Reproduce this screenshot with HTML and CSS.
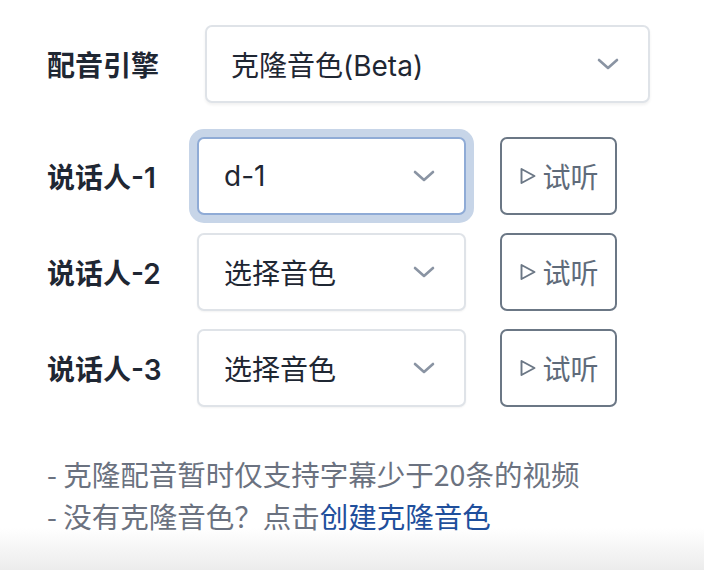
FILE: index.html
```html
<!DOCTYPE html>
<html lang="zh-CN">
<head>
<meta charset="utf-8">
<link rel="stylesheet" href="styles.css">
</head>
<body>
<div class="panel">
  <div class="engine-row">
    <div class="label engine-label">配音引擎</div>
    <div class="select engine-select">
      <span class="value">克隆音色(Beta)</span>
      <svg class="chev" width="22" height="12" viewBox="0 0 22 12"><path d="M2 2 L11 10 L20 2" fill="none" stroke="#8a94a3" stroke-width="2.6" stroke-linecap="round" stroke-linejoin="round"/></svg>
    </div>
  </div>
  <div class="speakers">
    <div class="speaker-row">
      <div class="label speaker-label">说话人-1</div>
      <div class="select voice-select focused">
        <span class="value">d-1</span>
        <svg class="chev" width="22" height="12" viewBox="0 0 22 12"><path d="M2 2 L11 10 L20 2" fill="none" stroke="#8a94a3" stroke-width="2.6" stroke-linecap="round" stroke-linejoin="round"/></svg>
      </div>
      <button class="listen"><svg class="play" width="16" height="18" viewBox="0 0 16 18"><path d="M1.5 2 L14.5 9 L1.5 16 Z" fill="none" stroke="#6b7785" stroke-width="1.9" stroke-linejoin="round"/></svg>试听</button>
    </div>
    <div class="speaker-row">
      <div class="label speaker-label">说话人-2</div>
      <div class="select voice-select">
        <span class="value">选择音色</span>
        <svg class="chev" width="22" height="12" viewBox="0 0 22 12"><path d="M2 2 L11 10 L20 2" fill="none" stroke="#8a94a3" stroke-width="2.6" stroke-linecap="round" stroke-linejoin="round"/></svg>
      </div>
      <button class="listen"><svg class="play" width="16" height="18" viewBox="0 0 16 18"><path d="M1.5 2 L14.5 9 L1.5 16 Z" fill="none" stroke="#6b7785" stroke-width="1.9" stroke-linejoin="round"/></svg>试听</button>
    </div>
    <div class="speaker-row">
      <div class="label speaker-label">说话人-3</div>
      <div class="select voice-select">
        <span class="value">选择音色</span>
        <svg class="chev" width="22" height="12" viewBox="0 0 22 12"><path d="M2 2 L11 10 L20 2" fill="none" stroke="#8a94a3" stroke-width="2.6" stroke-linecap="round" stroke-linejoin="round"/></svg>
      </div>
      <button class="listen"><svg class="play" width="16" height="18" viewBox="0 0 16 18"><path d="M1.5 2 L14.5 9 L1.5 16 Z" fill="none" stroke="#6b7785" stroke-width="1.9" stroke-linejoin="round"/></svg>试听</button>
    </div>
  </div>
  <div class="notes">
    <p class="note">- 克隆配音暂时仅支持字幕少于20条的视频</p>
    <p class="note">- 没有克隆音色？点击<a class="link" href="#">创建克隆音色</a></p>
  </div>
</div>
</body>
</html>
```
FILE: styles.css
```css
html {
  background: linear-gradient(to bottom, #ffffff 0px, #ffffff 528px, #ececec 570px);
  min-height: 570px;
}
body {
  margin: 0;
  font-family: "Inter", "Noto Sans CJK SC", sans-serif;
  font-size: 28px;
  color: #1f2733;
}
.panel {
  padding: 25px 0 0 47px;
}
.engine-row {
  display: flex;
  align-items: center;
}
.label {
  font-weight: 600;
  color: #1f2733;
}
.engine-label {
  width: 158px;
}
.select {
  box-sizing: border-box;
  height: 78px;
  display: flex;
  align-items: center;
  justify-content: space-between;
  background: #fff;
  border: 2px solid #dfe3e8;
  border-radius: 7px;
}
.engine-select {
  width: 445px;
  padding: 0 29px 0 24px;
  box-shadow: 0 2px 3px rgba(0, 0, 0, 0.06);
}
.value {
  color: #1f2733;
}
.chev {
  display: block;
}
.speakers {
  margin-top: 34px;
  display: flex;
  flex-direction: column;
  gap: 18px;
}
.speaker-row {
  display: flex;
  align-items: center;
}
.speaker-label {
  width: 150px;
}
.voice-select {
  width: 269px;
  padding: 0 29px 0 25px;
  box-shadow: 0 1px 2px rgba(0, 0, 0, 0.05);
}
.voice-select.focused {
  border-color: #8fabd6;
  box-shadow: 0 0 0 8px #c7d5e8;
}
.listen {
  box-sizing: border-box;
  margin-left: 34px;
  width: 117px;
  height: 78px;
  background: #fff;
  border: 2px solid #6b7785;
  border-radius: 7px;
  font-family: "Noto Sans CJK SC", sans-serif;
  font-size: 28px;
  color: #5f6b7a;
  display: flex;
  align-items: center;
  justify-content: center;
  gap: 6px;
  padding: 0 0 0 2px;
}
.play {
  display: block;
}
.notes {
  margin-top: 46px;
}
.note {
  margin: 0;
  line-height: 42px;
  color: #6b7280;
  font-size: 28.5px;
  font-family: "Noto Sans CJK SC", sans-serif;
}
.link {
  color: #1f4f9c;
  text-decoration: none;
}
```
